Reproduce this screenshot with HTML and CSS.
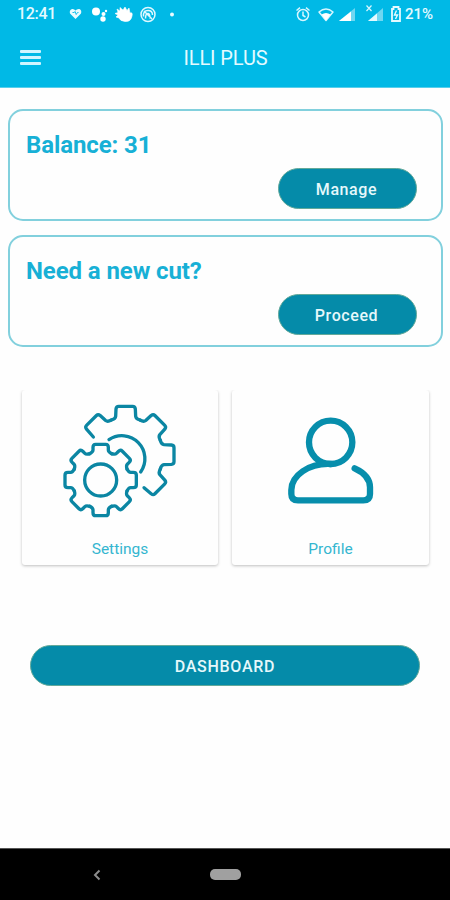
FILE: index.html
```html
<!DOCTYPE html>
<html lang="en">
<head>
  <meta charset="UTF-8">
  <title>ILLI PLUS</title>
  <link rel="stylesheet" href="styles.css">
</head>
<body>

  <header class="header">
    <div class="status-bar">
      <span class="time">12:41</span>
      <svg class="notifications" width="108" height="18" viewBox="0 0 108 18">
        <path d="M7.500 14 L2 8.500 Q1 5 4 4 Q6 3.500 7.500 5.500 Q9 3.500 11.500 4 Q14 5 13 8.500Z" fill="#e9fbff"/>
        <path d="M4.500 7.500 H6 L7.200 6.500 L8.200 9.500 L9.500 7.500 H10.500" fill="none" stroke="#00b9e6" stroke-width="0.900"/>
        <g fill="#fff">
          <circle cx="28" cy="6.500" r="4"/>
          <circle cx="35.500" cy="9" r="2"/>
          <circle cx="38" cy="6" r="1.200"/>
          <circle cx="35" cy="14" r="2.700"/>
        </g>
        <path d="M49 4 L52 6 L52 2.500 L55 5 L57 2 L59 5.500 L61 3 L62 8 Q65 7 64 11 Q63 17 57 16.500 Q52 16 51 13 L48 12 L50 10 L47 8.500 L50 7.500Z" fill="#fff" stroke="#fff" stroke-width="0.600" stroke-linejoin="round"/>
        <g fill="none" stroke="#dff8ff" stroke-width="1.500">
          <circle cx="80" cy="9.500" r="7"/>
          <path d="M75.500 11.500 Q75 5.500 80 5.500 Q84.500 5.500 84.500 10 M76 6 L84 14 M77.500 13.500 Q77.500 8.500 80 8.500 Q82 8.500 82 13.500"/>
        </g>
        <circle cx="104" cy="9.500" r="2" fill="#e9fbff"/>
      </svg>
      <svg class="signals" width="108" height="18" viewBox="0 0 108 18">
        <g fill="none" stroke="#d6f6ff" stroke-width="1.500">
          <circle cx="8" cy="10" r="5.500"/>
          <path d="M8 6.500 V10.500 L10.500 12 M1.500 5.500 L5 2.700 M14.500 5.500 L11 2.700"/>
        </g>
        <path d="M24 7 Q31 1 38 7 L31 15.500Z" fill="none" stroke="#d6f6ff" stroke-width="1.500" stroke-linejoin="round"/>
        <path d="M26.500 9.500 Q31 6.500 35.500 9.500 L31 15.500Z" fill="#fff"/>
        <path d="M44 16 L60 3 V16Z" fill="#6fd7f1"/>
        <path d="M44 16 L56 6.500 V16Z" fill="#fff"/>
        <path d="M73 16 L88 3 V16Z" fill="#6fd7f1"/>
        <path d="M73 16 L82 8.500 V16Z" fill="#e4faff"/>
        <path d="M71.500 0.500 L76.500 6 M76.500 0.500 L71.500 6" stroke="#d6f6ff" stroke-width="1.200"/>
        <path d="M98.500 4 V2 H103.500 V4 H105 V16 H97 V4Z" fill="none" stroke="#e4faff" stroke-width="1.800"/>
        <path d="M101.500 5.500 L99.500 10 H102.500 L100.500 14" fill="none" stroke="#e4faff" stroke-width="1.400"/>
      </svg>
      <span class="battery">21%</span>
    </div>
    <div class="title-bar">
      <div class="menu"><span></span><span></span><span></span></div>
      <h1>ILLI PLUS</h1>
    </div>
  </header>

  <main class="content">
    <div class="card">
      <h2>Balance: 31</h2>
      <button class="btn">Manage</button>
    </div>
    <div class="card">
      <h2>Need a new cut?</h2>
      <button class="btn">Proceed</button>
    </div>

    <div class="tiles">
      <div class="tile">
        <svg width="120" height="120" viewBox="150 59 360 360" fill="none" stroke="#0b86a3" stroke-width="10" stroke-linecap="round" stroke-linejoin="round">
          <defs>
            <path id="tooth" d="M-33 -79 Q-23 -84 -23 -90 V-98 Q-23 -107 -15 -107 H15 Q23 -107 23 -98 V-90 Q23 -84 33 -79"/>
            <path id="bigTooth" d="M-43 -104 Q-31 -107 -30 -115 L-29 -137 Q-28 -145 -21 -145 H21 Q28 -145 29 -137 L30 -115 Q31 -107 43 -104"/>
          </defs>
          <g transform="translate(347 223)">
            <path transform="rotate(-45)" d="M-31 -106 L-29 -137 Q-28 -145 -21 -145 H21 Q28 -145 29 -137 L30 -115 Q31 -107 43 -104"/>
            <use href="#bigTooth"/>
            <use href="#bigTooth" transform="rotate(45)"/>
            <use href="#bigTooth" transform="rotate(90)"/>
            <path transform="rotate(135)" d="M-43 -104 Q-31 -107 -30 -115 L-29 -137 Q-28 -145 -21 -145 H21 Q28 -145 29 -137 L31 -109"/>
            <path d="M-50 -45 A69 69 0 0 1 45 52"/>
          </g>
          <g transform="translate(272 299)">
            <use href="#tooth"/>
            <use href="#tooth" transform="rotate(45)"/>
            <use href="#tooth" transform="rotate(90)"/>
            <use href="#tooth" transform="rotate(135)"/>
            <use href="#tooth" transform="rotate(180)"/>
            <use href="#tooth" transform="rotate(225)"/>
            <use href="#tooth" transform="rotate(270)"/>
            <use href="#tooth" transform="rotate(315)"/>
            <circle r="48"/>
          </g>
        </svg>
        <p>Settings</p>
      </div>
      <div class="tile">
        <svg width="90" height="120" viewBox="182 60 270 360" fill="none" stroke="#078eac" stroke-width="19" stroke-linecap="round">
          <circle cx="316" cy="187" r="65"/>
          <path d="M316 252 C250 249 198 287 198 330 V342 Q198 361 218 361 H414 Q434 361 434 342 V322 Q434 286 388 265"/>
        </svg>
        <p>Profile</p>
      </div>
    </div>

    <button class="btn btn-wide">DASHBOARD</button>
  </main>

  <footer class="nav-bar">
    <svg width="8" height="12" viewBox="0 0 8 12"><path d="M6.500 1.500 L2 6 L6.500 10.500" fill="none" stroke="#8c8c8c" stroke-width="2"/></svg>
    <span class="home"></span>
    <span></span>
  </footer>

</body>
</html>
```
FILE: styles.css
```css
* {
  box-sizing: border-box;
}
body {
  margin: 0;
  height: 900px;
  display: flex;
  flex-direction: column;
  font-family: Roboto, sans-serif;
  background: #fefefe;
}
h1, h2, p {
  margin: 0;
}
.header {
  height: 88px;
  background: #00b9e6;
  color: #e4faff;
  border-bottom: 1px solid #58cfec;
}
.status-bar {
  height: 28px;
  display: flex;
  align-items: center;
  padding: 0 15px 0 17px;
  font-size: 16px;
  line-height: 28px;
}
.time {
  width: 51px;
  font-weight: 500;
  letter-spacing: -0.3px;
}
.notifications, .signals {
  margin-top: -1px;
}
.signals {
  margin-left: auto;
}
.battery {
  width: 30px;
  margin-left: 2px;
  font-weight: 500;
  font-size: 15px;
}
.title-bar {
  height: 59px;
  display: grid;
  grid-template-columns: 60px 1fr 59px;
  align-items: center;
}
.title-bar h1 {
  font-size: 20px;
  font-weight: 400;
  letter-spacing: -0.1px;
  text-align: center;
}
.menu {
  width: 21px;
  margin-left: 20px;
  margin-top: -1px;
  display: grid;
  gap: 3px;
}
.menu span {
  height: 3px;
  border-radius: 1px;
  background: #d0f5ff;
}
.content {
  flex: 1;
  padding: 21px 7px 0 8px;
}
.card {
  height: 112px;
  margin-bottom: 14px;
  padding: 19px 24px 10px 16px;
  border: 2px solid #82d0dd;
  border-radius: 15px;
  display: flex;
  flex-direction: column;
  justify-content: space-between;
}
.card h2 {
  font-size: 24px;
  line-height: 30px;
  font-weight: 700;
  letter-spacing: -0.1px;
  color: #17b0d6;
}
.btn {
  align-self: flex-end;
  width: 139px;
  height: 41px;
  padding: 1px 2px 0 0;
  border: 1px solid #63a99a;
  border-radius: 21px;
  background: #058ba9;
  color: #e6f8fb;
  font-family: Roboto, sans-serif;
  font-size: 16px;
  font-weight: 500;
  letter-spacing: 0.6px;
}
.tiles {
  display: grid;
  grid-template-columns: 196px 197px;
  gap: 14px;
  margin: 43px 0 80px 14px;
}
.tile {
  height: 175px;
  padding-top: 10px;
  display: flex;
  flex-direction: column;
  align-items: center;
  border-radius: 3px;
  box-shadow: 0 1px 3px rgba(0, 0, 0, 0.25);
  clip-path: inset(0 -4px -5px -4px);
}
.tile p {
  margin-top: 19px;
  font-size: 15.500px;
  line-height: 20px;
  color: #35b6d0;
}
.btn-wide {
  display: block;
  width: 390px;
  margin-left: 22px;
  padding: 1px 0 0;
  letter-spacing: 0.7px;
}
.nav-bar {
  height: 52px;
  border-top: 1px solid #555;
  background: #000;
  display: grid;
  grid-template-columns: 194px 62px 194px;
  align-items: center;
  justify-items: center;
}
.home {
  width: 31px;
  height: 11px;
  border-radius: 5px;
  background: #a0a0a0;
}
```
